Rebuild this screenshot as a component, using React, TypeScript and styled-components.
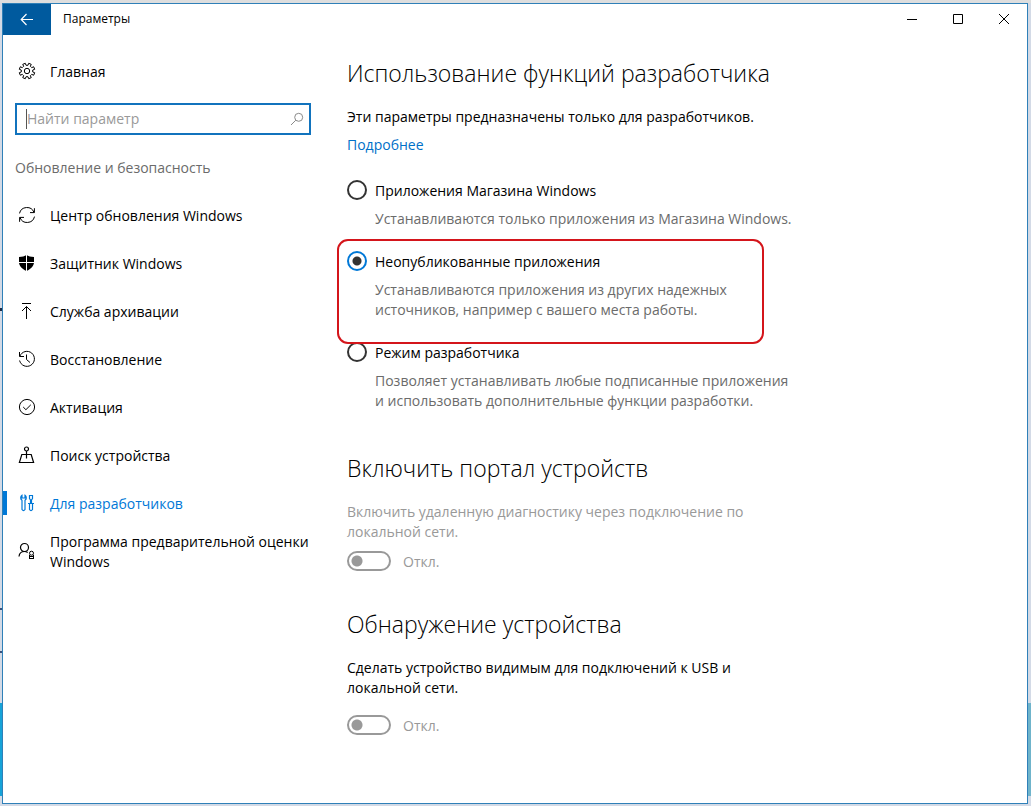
import React from 'react';
import styled, { createGlobalStyle } from 'styled-components';

const ACCENT = '#0078d7';

const GlobalStyle = createGlobalStyle`
  *, *::before, *::after { box-sizing: border-box; }
  body {
    margin: 0;
    background: #d3dae6;
    color: #000;
    font-family: 'Open Sans', 'Noto Sans', sans-serif;
    font-size: 14px;
    line-height: 20px;
  }
  button, input { font: inherit; color: inherit; }
  h2, p { margin: 0; }
`;

const Desktop = styled.div`
  display: flex;
  min-height: 100vh;
  padding: 3px 3px 2px 2px;
  background:
    linear-gradient(#16a3d8, #16a3d8) left 0 top 703px / 3px 93px no-repeat,
    linear-gradient(#6fb4cb, #6fb4cb) right 0 top 703px / 3px 93px no-repeat,
    linear-gradient(#39527c, #39527c) left 0 top 608px / 3px 2px no-repeat,
    linear-gradient(#39527c, #39527c) left 0 top 651px / 3px 2px no-repeat,
    linear-gradient(#1c2b45, #1c2b45) left 0 top 308px / 3px 3px no-repeat,
    linear-gradient(#dedede, #dedede) left 0 top 0 / 100% 3px no-repeat,
    #d3dae6;
`;

const Window = styled.div`
  flex: 1;
  display: flex;
  flex-direction: column;
  border: 1px solid #2f80b8;
  background: #fff;
`;

const TitleBar = styled.header`
  display: flex;
  align-items: stretch;
  height: 31px;
`;

const BackButton = styled.button`
  display: flex;
  align-items: center;
  justify-content: center;
  width: 48px;
  padding: 0;
  border: 0;
  background: #005a9e;
  color: #fff;
`;

const Title = styled.h1`
  flex: 1;
  margin: 0;
  padding-left: 12px;
  font-size: 12px;
  font-weight: 400;
  line-height: 30px;
`;

const CaptionButton = styled.button`
  display: flex;
  align-items: center;
  justify-content: center;
  width: 46px;
  height: 30px;
  padding: 0;
  border: 0;
  background: transparent;
`;

const Body = styled.div`
  flex: 1;
  display: flex;
`;

const Sidebar = styled.aside`
  flex: none;
  width: 320px;
  padding-top: 12px;
`;

const NavLink = styled.a<{ $active?: boolean }>`
  position: relative;
  display: flex;
  align-items: center;
  gap: 14px;
  height: 48px;
  padding-left: 15px;
  color: ${p => (p.$active ? ACCENT : '#000')};
  text-decoration: none;

  &::before {
    content: '';
    display: ${p => (p.$active ? 'block' : 'none')};
    position: absolute;
    left: 0;
    top: 12px;
    width: 4px;
    height: 24px;
    background: ${ACCENT};
  }
`;

const NavText = styled.span`
  padding-top: 2px;
`;

const SearchBox = styled.label`
  display: flex;
  align-items: center;
  height: 32px;
  margin: 8px 12px 0;
  padding: 0 5px 0 9px;
  border: 2px solid #1173bd;
  color: #8a8a8a;
`;

const SearchInput = styled.input`
  flex: 1;
  min-width: 0;
  padding: 0;
  border: 0;
  border-left: 1px solid #555;
  outline: 0;
  background: transparent;
  &::placeholder { color: #999; opacity: 1; }
`;

const GroupLabel = styled.div`
  margin: 23px 12px 13px;
  color: #6b6b6b;
`;

const Main = styled.main`
  flex: 1;
  display: flex;
  flex-direction: column;
  gap: 37px;
  padding: 22px 24px 24px;
`;

const Section = styled.section`
  &:first-child { padding-bottom: 4px; }
`;

const Heading = styled.h2`
  margin-bottom: 18px;
  font-size: 23px;
  font-weight: 300;
  line-height: 32px;
`;

const Text = styled.p<{ $muted?: boolean }>`
  color: ${p => (p.$muted ? '#999' : '#000')};
`;

const MoreLink = styled.a`
  display: inline-block;
  margin-top: 8px;
  color: #0070c8;
  text-decoration: none;
`;

const Options = styled.div`
  display: flex;
  flex-direction: column;
  gap: 22px;
  margin-top: 25px;
`;

const Option = styled.div`
  position: relative;
`;

const OptionLabel = styled.label`
  display: flex;
  align-items: center;
  gap: 8px;
  height: 20px;
`;

const OptionName = styled.span`
  padding-top: 2px;
`;

const Radio = styled.input`
  appearance: none;
  flex: none;
  width: 20px;
  height: 20px;
  margin: 0;
  border: 2px solid #333;
  border-radius: 50%;
  background: #fff;
  &:checked {
    border-color: ${ACCENT};
    background: radial-gradient(circle, #333 4px, #fff 5px);
  }
`;

const OptionText = styled.p`
  padding: 9px 0 0 28px;
  color: #6b6b6b;
`;

const Highlight = styled.div`
  position: absolute;
  z-index: 1;
  top: -12px;
  bottom: -24px;
  left: -10px;
  width: 427px;
  border: 2px solid #d4151b;
  border-radius: 11px;
  pointer-events: none;
`;

const ToggleLabel = styled.label<{ $spaced?: boolean }>`
  display: flex;
  align-items: center;
  gap: 12px;
  height: 20px;
  margin-top: ${p => (p.$spaced ? 17 : 9)}px;
  color: #999;
`;

const ToggleState = styled.span`
  padding-top: 2px;
`;

const Toggle = styled.input`
  appearance: none;
  flex: none;
  width: 44px;
  height: 20px;
  margin: 0;
  border: 2px solid #999;
  border-radius: 10px;
  background: radial-gradient(circle at 8px 8px, #999 5px, #fff 6px);
`;

const Glyph = styled.svg`
  flex: none;
  display: block;
  fill: none;
  stroke: currentColor;
`;

const Icon = ({ children, size = 18 }: { children: React.ReactNode; size?: number }) => (
  <Glyph width={size} height={size} viewBox={`0 0 ${size} ${size}`} aria-hidden="true">
    {children}
  </Glyph>
);

const gearPath = (() => {
  const pts: string[] = [];
  for (let i = 0; i < 8; i++) {
    [[-13, 5.8], [-10, 7.9], [10, 7.9], [13, 5.8]].forEach(([d, r]) => {
      const a = ((i * 45 + 22.5 + d) * Math.PI) / 180;
      pts.push(`${(9 + r * Math.cos(a)).toFixed(2)} ${(9 + r * Math.sin(a)).toFixed(2)}`);
    });
  }
  return `M${pts.join('L')}Z`;
})();

const icons = {
  gear: <><path d={gearPath} /><circle cx="9" cy="9" r="2.7" /></>,
  sync: (
    <>
      <path d="M1.5 7.4A7.6 7.6 0 0 1 16 6.4M16.5 10.6A7.6 7.6 0 0 1 2 11.6" />
      <path d="M16.4 2.2V6.6H12M1.6 15.8V11.4H6" />
    </>
  ),
  shield: (
    <>
      <path fill="currentColor" stroke="none" d="M8.5 1C6.8 2.3 4 3 1 3V8C1 12 4 15 8.5 17C13 15 16 12 16 8V3C13 3 10.2 2.3 8.5 1Z" />
      <path stroke="#fff" d="M8.5 0V18M0 8.5H18" />
    </>
  ),
  backup: <path d="M4 1.5H13M8.5 17V4.5M4 9L8.5 4.5L13 9" />,
  history: (
    <>
      <path d="M1.9 6.2A7.5 7.5 0 1 1 1.6 10.5" />
      <path d="M1.5 2V6.5H6M8.5 4.5V9.5L12 12.5" />
    </>
  ),
  check: <><circle cx="9" cy="9" r="7.6" /><path d="M5.2 9L7.9 11.7L12.8 6.8" /></>,
  locate: (
    <>
      <circle cx="8.5" cy="3" r="2" strokeWidth="1.2" />
      <path strokeWidth="1.2" d="M8.5 5V12.5M3.8 8.5H13.2L15.6 16.5H1.4Z" />
    </>
  ),
  tools: (
    <>
      <path strokeWidth="1.2" d="M4 1.3C2.2 2.6 2.4 5.2 4 6.3V15.5Q5.5 17.6 7 15.5V6.3C8.6 5.2 8.8 2.6 7 1.3V4H4Z" />
      <path strokeWidth="1.2" d="M11.5 1.5H14.5V4.5L13.5 6V9.5H12.5V6L11.5 4.5ZM10 9.5H16M11.5 9.5V15.5Q13 17.6 14.5 15.5V9.5" />
    </>
  ),
  insider: (
    <>
      <circle cx="6.5" cy="5.5" r="4" strokeWidth="1.2" />
      <path strokeWidth="1.2" d="M1 14.5C1.3 11.5 3.5 9.5 6.5 9.5C7.8 9.5 8.8 9.9 9.7 10.5" />
      <circle cx="13.5" cy="11.2" r="2" />
      <path d="M11.5 12.8V17M15.5 12.8V17M11.5 14.5H15.5M11.5 16.5H15.5" />
    </>
  ),
};

const navItems: { icon: keyof typeof icons; label: React.ReactNode; active?: boolean }[] = [
  { icon: 'sync', label: 'Центр обновления Windows' },
  { icon: 'shield', label: 'Защитник Windows' },
  { icon: 'backup', label: 'Служба архивации' },
  { icon: 'history', label: 'Восстановление' },
  { icon: 'check', label: 'Активация' },
  { icon: 'locate', label: 'Поиск устройства' },
  { icon: 'tools', label: 'Для разработчиков', active: true },
  { icon: 'insider', label: <>Программа предварительной оценки<br />Windows</> },
];

export default function App() {
  return (
    <Desktop>
      <GlobalStyle />
      <Window>
        <TitleBar>
          <BackButton aria-label="Назад">
            <Icon size={14}><path d="M13 6.5H1.5M6.5 1L1.2 6.5L6.5 12" strokeWidth="1.2" /></Icon>
          </BackButton>
          <Title>Параметры</Title>
          <CaptionButton aria-label="Свернуть"><Icon size={12}><path d="M1 6.5H11" /></Icon></CaptionButton>
          <CaptionButton aria-label="Развернуть"><Icon size={12}><path d="M1.5 1.5H10.5V10.5H1.5Z" /></Icon></CaptionButton>
          <CaptionButton aria-label="Закрыть"><Icon size={12}><path d="M1 1L11 11M11 1L1 11" /></Icon></CaptionButton>
        </TitleBar>
        <Body>
          <Sidebar>
            <NavLink href="#home"><Icon>{icons.gear}</Icon><NavText>Главная</NavText></NavLink>
            <SearchBox>
              <SearchInput type="text" placeholder="Найти параметр" aria-label="Найти параметр" />
              <Icon size={14}><circle cx="8.7" cy="5.3" r="4" /><path d="M5.8 8.2L1 13" /></Icon>
            </SearchBox>
            <GroupLabel>Обновление и безопасность</GroupLabel>
            <nav>
              {navItems.map(item => (
                <NavLink key={item.icon} href={`#${item.icon}`} $active={item.active}>
                  <Icon>{icons[item.icon]}</Icon>
                  <NavText>{item.label}</NavText>
                </NavLink>
              ))}
            </nav>
          </Sidebar>
          <Main>
            <Section>
              <Heading>Использование функций разработчика</Heading>
              <Text>Эти параметры предназначены только для разработчиков.</Text>
              <MoreLink href="#more">Подробнее</MoreLink>
              <Options>
                <Option>
                  <OptionLabel><Radio type="radio" name="mode" /><OptionName>Приложения Магазина Windows</OptionName></OptionLabel>
                  <OptionText>Устанавливаются только приложения из Магазина Windows.</OptionText>
                </Option>
                <Option>
                  <OptionLabel><Radio type="radio" name="mode" defaultChecked /><OptionName>Неопубликованные приложения</OptionName></OptionLabel>
                  <OptionText>Устанавливаются приложения из других надежных<br />источников, например с вашего места работы.</OptionText>
                  <Highlight />
                </Option>
                <Option>
                  <OptionLabel><Radio type="radio" name="mode" /><OptionName>Режим разработчика</OptionName></OptionLabel>
                  <OptionText>Позволяет устанавливать любые подписанные приложения<br />и использовать дополнительные функции разработки.</OptionText>
                </Option>
              </Options>
            </Section>
            <Section>
              <Heading>Включить портал устройств</Heading>
              <Text $muted>Включить удаленную диагностику через подключение по<br />локальной сети.</Text>
              <ToggleLabel><Toggle type="checkbox" role="switch" disabled /><ToggleState>Откл.</ToggleState></ToggleLabel>
            </Section>
            <Section>
              <Heading>Обнаружение устройства</Heading>
              <Text>Сделать устройство видимым для подключений к USB и<br />локальной сети.</Text>
              <ToggleLabel $spaced><Toggle type="checkbox" role="switch" disabled /><ToggleState>Откл.</ToggleState></ToggleLabel>
            </Section>
          </Main>
        </Body>
      </Window>
    </Desktop>
  );
}
